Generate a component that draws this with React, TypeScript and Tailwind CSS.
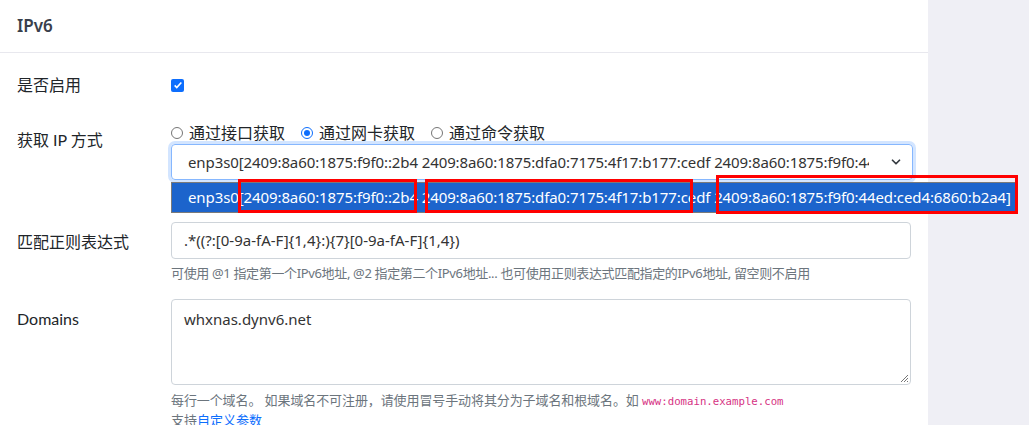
import { ChevronDown } from "lucide-react";

const addr =
  "enp3s0[2409:8a60:1875:f9f0::2b4 2409:8a60:1875:dfa0:7175:4f17:b177:cedf 2409:8a60:1875:f9f0:44ed:ced4:6860:b2a4]";

const labelFont = { fontFamily: '"Lato", "Noto Sans CJK SC", sans-serif' };

function Radio({ checked, label }: { checked?: boolean; label: string }) {
  return (
    <label className="flex items-center gap-[6px]">
      {checked ? (
        <span className="w-[12px] h-[12px] rounded-full border border-[#0d6efd] flex items-center justify-center">
          <span className="w-[6px] h-[6px] rounded-full bg-[#0d6efd]" />
        </span>
      ) : (
        <span className="w-[12px] h-[12px] rounded-full border border-[#767676] bg-white" />
      )}
      <span className="text-[16px]" style={labelFont}>{label}</span>
    </label>
  );
}

function Row({ label, labelTop, children }: { label: string; labelTop: string; children: React.ReactNode }) {
  return (
    <div className="flex">
      <div className={`w-[154px] shrink-0 text-[16px] ${labelTop}`} style={labelFont}>
        {label}
      </div>
      <div className="w-[742px]">{children}</div>
    </div>
  );
}

export default function App() {
  return (
    <div
      className="flex w-[1029px] h-[425px] overflow-hidden text-[15px] text-[#212529]"
      style={{ fontFamily: '"Noto Sans", "Noto Sans CJK SC", sans-serif' }}
    >
      <div className="w-[928px] bg-white">
        <div className="h-[53px] px-[17px] flex items-center border-b border-[#e8e8ee]">
          <h2 className="text-[17px] font-semibold text-[#3a3f4b]">IPv6</h2>
        </div>

        <div className="px-[17px] pt-[20px]">
          <Row label="是否启用" labelTop="">
            <div className="h-[24px] flex items-center">
              <span className="w-[13px] h-[13px] rounded-[2px] bg-[#0d6efd] flex items-center justify-center">
                <svg viewBox="0 0 12 12" className="w-[10px] h-[10px]" fill="none" stroke="white" strokeWidth="2">
                  <path d="M2 6.5l2.5 2.5L10 3" />
                </svg>
              </span>
            </div>
          </Row>

          <div className="mt-[21px]">
            <Row label="获取 IP 方式" labelTop="pt-[10px]">
              <div className="flex items-center gap-[16px] h-[24px] mt-[3px]">
                <Radio label="通过接口获取" />
                <Radio checked label="通过网卡获取" />
                <Radio label="通过命令获取" />
              </div>
              <div className="relative mt-[-1px]">
                <div className="h-[36px] rounded-[4px] border border-[#86b7fe] shadow-[0_0_0_3px_rgba(13,110,253,0.18)] flex items-center pl-[16px] pr-[9px]">
                  <span className="flex-1 overflow-hidden whitespace-nowrap text-[#333] tracking-[-0.1px]">{addr}</span>
                  <ChevronDown className="w-[14px] h-[14px] ml-[20px] text-[#343a40]" strokeWidth={3} />
                </div>
                <div className="absolute left-0 top-[38px] w-[846px] h-[31px] border border-[#7a7a7a] bg-[#1c64cc] flex items-center pl-[16px] text-white whitespace-nowrap tracking-[-0.1px] z-10">
                  {addr}
                </div>
                <div className="absolute left-[67px] top-[35px] w-[179px] h-[34px] border-[3px] border-[#ff0000] z-20" />
                <div className="absolute left-[254px] top-[35px] w-[268px] h-[34px] border-[3px] border-[#ff0000] z-20" />
                <div className="absolute left-[545px] top-[31px] w-[302px] h-[39px] border-[3px] border-[#ff0000] z-20" />
              </div>
            </Row>
          </div>

          <div className="mt-[42px]">
            <Row label="匹配正则表达式" labelTop="pt-[8px]">
              <div className="h-[37px] rounded-[4px] border border-[#ced4da] flex items-center px-[12px] text-[#333]">
                .*((?:[0-9a-fA-F]&#123;1,4&#125;:)&#123;7&#125;[0-9a-fA-F]&#123;1,4&#125;)
              </div>
              <div className="text-[13px] text-[#6c757d] mt-[4px] leading-[20px] tracking-[-0.35px]">
                可使用 @1 指定第一个IPv6地址, @2 指定第二个IPv6地址... 也可使用正则表达式匹配指定的IPv6地址, 留空则不启用
              </div>
            </Row>
          </div>

          <div className="mt-[16px]">
            <Row label="Domains" labelTop="pt-[8px]">
              <div className="h-[86px] rounded-[4px] border border-[#ced4da] px-[12px] pt-[8px] text-[#333] relative">
                whxnas.dynv6.net
                <svg className="absolute right-[1px] bottom-[1px] w-[9px] h-[9px]" viewBox="0 0 9 9" stroke="#777" strokeWidth="1">
                  <path d="M8 1L1 8M8 4L4 8M8 7L7 8" />
                </svg>
              </div>
              <div className="text-[13px] text-[#6c757d] mt-[5px] leading-[20px] tracking-[-0.1px]">
                每行一个域名。 如果域名不可注册，请使用冒号手动将其分为子域名和根域名。如{" "}
                <code className="text-[#d63384] text-[10.7px] tracking-normal" style={{ fontFamily: '"DejaVu Sans Mono", monospace' }}>
                  www:domain.example.com
                </code>
              </div>
              <div className="text-[13px] text-[#6c757d] leading-[16px]">
                支持<a className="text-[#0d6efd]">自定义参数</a>
              </div>
            </Row>
          </div>
        </div>
      </div>
      <div className="flex-1 bg-[#efeff5]" />
    </div>
  );
}
